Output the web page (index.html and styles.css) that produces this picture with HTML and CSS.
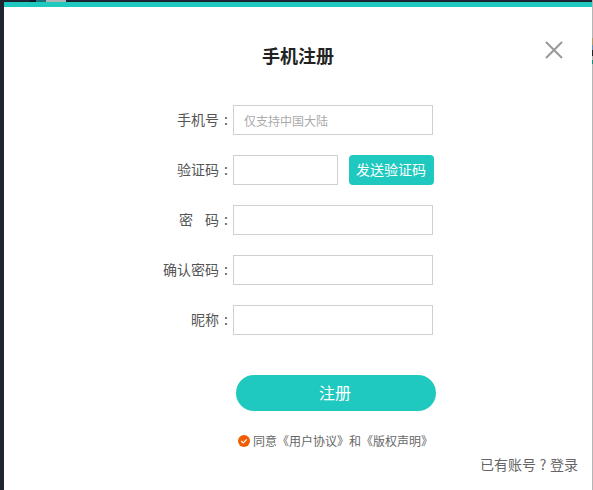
FILE: index.html
```html
<!DOCTYPE html>
<html lang="zh">
<head>
<meta charset="utf-8">
<title>手机注册</title>
<link rel="stylesheet" href="styles.css">
</head>
<body>
<div class="page">
  <div class="rail"></div>
  <div class="main">
    <div class="topstrip">
      <span class="seg seg-a"></span><span class="seg seg-b"></span><span class="seg seg-c"></span><span class="seg seg-d"></span><span class="seg seg-e"></span>
    </div>
    <div class="dialog">
      <div class="accent"></div>
      <svg class="close" width="18" height="18" viewBox="0 0 18 18"><path d="M1 1L17 17M17 1L1 17" stroke="#999" stroke-width="2" fill="none"/></svg>
      <h1 class="title">手机注册</h1>
      <form class="form">
        <div class="row"><label class="label">手机号 :</label><input class="input" placeholder="仅支持中国大陆"></div>
        <div class="row"><label class="label">验证码 :</label><input class="input input-code"><button type="button" class="send">发送验证码</button></div>
        <div class="row"><label class="label">密<span class="wide"></span>码 :</label><input class="input"></div>
        <div class="row"><label class="label">确认密码 :</label><input class="input"></div>
        <div class="row"><label class="label">昵称 :</label><input class="input"></div>
        <button type="button" class="submit">注册</button>
        <div class="agree">
          <svg class="check" width="12" height="12" viewBox="0 0 12 12"><circle cx="6" cy="6" r="6" fill="#f25c05"/><path d="M3.2 6l2 2 3.6-3.6" stroke="#fff" stroke-width="1.2" fill="none"/></svg>
          <span>同意《用户协议》和《版权声明》</span>
        </div>
      </form>
      <div class="login">已有账号<span class="q">?</span>登录</div>
    </div>
  </div>
  <div class="edge"><span class="e1"></span><span class="e2"></span><span class="e3"></span><span class="e4"></span></div>
</div>
</body>
</html>
```
FILE: styles.css
```css
* { box-sizing: border-box; }
html, body { margin: 0; height: 100%; overflow: hidden; background: #fff; }
body { font-family: "Noto Sans CJK SC", "Liberation Sans", sans-serif; color: #555; }
.page { display: flex; width: 593px; height: 490px; }
.rail { width: 4px; background: #1c2530; }
.main { width: 588px; display: flex; flex-direction: column; }
.topstrip { height: 2px; display: flex; background: #1c2530; flex: none; }
.seg { display: block; height: 2px; }
.seg-a { width: 26px; background: #1c2530; }
.seg-b { width: 6px; background: #10181f; }
.seg-c { width: 10px; background: #1f6f7c; }
.seg-d { width: 20px; background: #b3b3b3; }
.seg-e { flex: 1; background: #1c2530; }
.dialog { position: relative; flex: 1; background: #fff; }
.accent { height: 5px; background: #1fc9c0; }
.close { position: absolute; left: 541px; top: 39px; }
.title { margin: 0; padding-top: 35px; height: 98px; text-align: center; font-size: 18px; line-height: 26px; font-weight: 700; color: #222; }
.form { display: flex; flex-direction: column; gap: 20px; }
.row { display: flex; align-items: center; height: 30px; }
.label { width: 224px; padding-bottom: 2px; text-align: right; font-size: 14px; color: #555; margin-right: 5px; white-space: pre; word-spacing: 2px; }
.wide { display: inline-block; width: 12px; }
.input { width: 200px; height: 30px; border: 1px solid #d0d0d0; padding: 0 10px; font: 12px "Noto Sans CJK SC", sans-serif; color: #555; background: #fff; outline: none; border-radius: 0; }
.input::placeholder { color: #aaa; opacity: 1; }
.input-code { width: 105px; }
.send { width: 85px; height: 30px; margin-left: 11px; padding: 0 1px 2px 0; border: 0; border-radius: 4px; background: #1fc9c0; color: #fff; font: 14px "Noto Sans CJK SC", sans-serif; white-space: nowrap; }
.submit { width: 200px; height: 36px; margin: 20px 0 0 232px; padding: 0 2px 2px 0; border: 0; border-radius: 18px; background: #1fc9c0; color: #fff; font: 16px "Noto Sans CJK SC", sans-serif; }
.agree { display: flex; align-items: center; gap: 3px; margin: 1px 0 0 234px; font-size: 12px; line-height: 18px; color: #666; white-space: nowrap; }
.check { flex: none; }
.login { position: absolute; right: 14px; bottom: 16px; font-size: 14px; line-height: 20px; color: #666; white-space: nowrap; }
.q { display: inline-block; width: 14px; text-align: center; }
.edge { width: 1px; background: #b5b5b5; display: flex; flex-direction: column; padding-top: 38px; }
.edge span { display: block; width: 1px; }
.e1 { height: 7px; background: #b09a68; }
.e2 { height: 5px; background: #5d8fc0; }
.e3 { height: 6px; background: #222; }
.e4 { height: 4px; background: #0f8f78; margin-top: 4px; }
```
